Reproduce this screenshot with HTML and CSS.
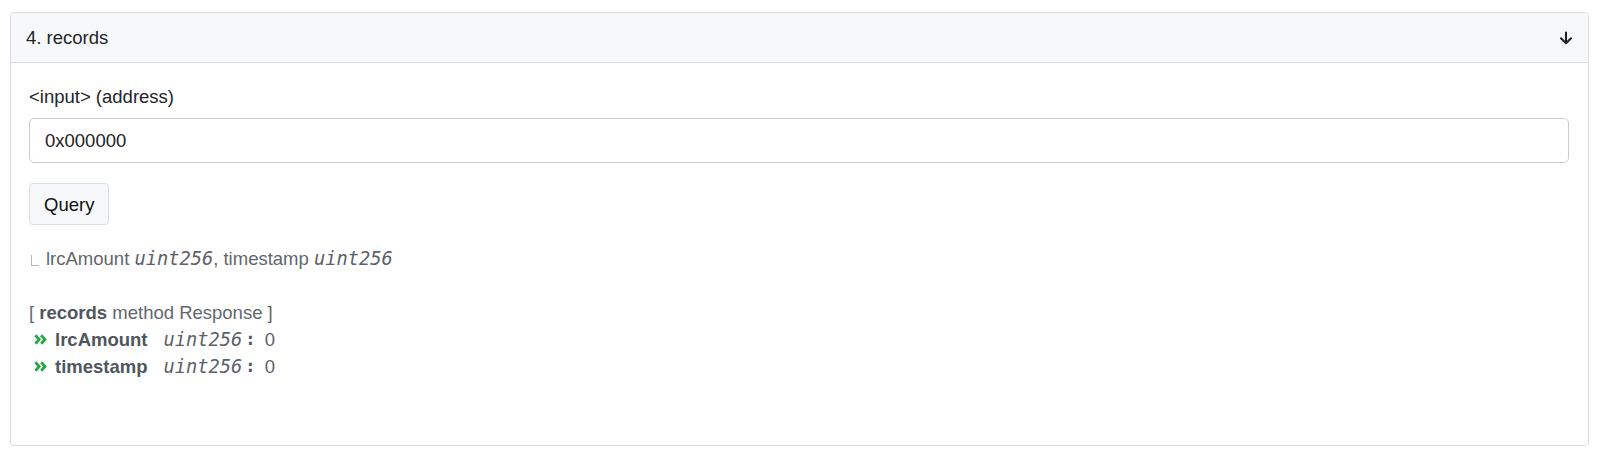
FILE: index.html
```html
<!DOCTYPE html>
<html>
<head>
<meta charset="utf-8">
<link rel="stylesheet" href="styles.css">
</head>
<body>
<div class="card">
  <div class="card-header">
    <span class="title">4. records</span>
    <svg class="arrow" width="14" height="14" viewBox="0 0 14 14"><path d="M7 1.5V12.3M2 7.3L7 12.3L12 7.3" fill="none" stroke="#222" stroke-width="2.1" stroke-linecap="round" stroke-linejoin="round"/></svg>
  </div>
  <div class="card-body">
    <div class="label">&lt;input&gt; (address)</div>
    <div class="input">0x000000</div>
    <div class="btn">Query</div>
    <div class="sig"><span class="corner"></span>lrcAmount <i class="mono">uint256</i>, timestamp <i class="mono">uint256</i></div>
    <div class="resp">[ <b>records</b> method Response ]</div>
    <div class="row"><svg class="chev" width="13" height="11" viewBox="0 0 13 11"><path d="M1.4 1.3L5.2 5.5L1.4 9.7M7.2 1.3L11 5.5L7.2 9.7" fill="none" stroke="#28a745" stroke-width="2.8"/></svg><b class="name">lrcAmount</b><i class="mono">uint256</i><b class="colon">:</b>&nbsp;0</div>
    <div class="row"><svg class="chev" width="13" height="11" viewBox="0 0 13 11"><path d="M1.4 1.3L5.2 5.5L1.4 9.7M7.2 1.3L11 5.5L7.2 9.7" fill="none" stroke="#28a745" stroke-width="2.8"/></svg><b class="name">timestamp</b><i class="mono">uint256</i><b class="colon">:</b>&nbsp;0</div>
  </div>
</div>
</body>
</html>
```
FILE: styles.css
```css
html, body {
  margin: 0;
  padding: 0;
  background: #fff;
}
body {
  font-family: "Liberation Sans", Arial, sans-serif;
  font-size: 18.5px;
  line-height: 27px;
  color: #212529;
}
.card {
  margin: 12px 11px 0 10px;
  height: 434px;
  box-sizing: border-box;
  border: 1px solid #d9dce0;
  border-radius: 4px;
  overflow: hidden;
}
.card-header {
  height: 49px;
  background: #f7f8fa;
  border-bottom: 1px solid #d9dce0;
  display: flex;
  align-items: center;
  justify-content: space-between;
  padding: 0 16px 0 15px;
}
.arrow {
  display: block;
  margin-right: -1px;
}
.card-body {
  padding: 20px 19px 0 18px;
}
.label {
  margin-bottom: 8px;
}
.input {
  height: 45px;
  box-sizing: border-box;
  border: 1px solid #c9ced4;
  border-radius: 5px;
  padding: 0 15px;
  display: flex;
  align-items: center;
  color: #1f2328;
}
.btn {
  display: inline-flex;
  align-items: center;
  height: 42px;
  box-sizing: border-box;
  margin-top: 20px;
  padding: 0 14px 0 14px;
  border: 1px solid #dadde2;
  border-radius: 4px;
  background: #f7f8fa;
  color: #111;
}
.sig {
  margin-top: 20px;
  color: #5f666d;
}
.corner {
  display: inline-block;
  width: 7px;
  height: 10px;
  border-left: 1.5px solid #b3b8be;
  border-bottom: 1.5px solid #b3b8be;
  margin: 0 7px 0 2px;
  vertical-align: -1px;
}
.mono {
  font-family: "DejaVu Sans Mono", "Liberation Mono", monospace;
  font-style: italic;
  font-size: 18.7px;
  color: #5b6168;
}
.resp {
  margin-top: 27px;
  color: #61686f;
}
.resp b {
  color: #50575e;
}
.row {
  display: flex;
  align-items: center;
  color: #5c636a;
  padding-left: 5px;
}
.chev {
  display: block;
  margin-right: 8px;
}
.name {
  color: #4f565d;
  margin-right: 16px;
}
.colon {
  font-family: "DejaVu Sans Mono", monospace;
  margin: 0 4px 0 3px;
  color: #4f565d;
  font-size: 17px;
}
```
